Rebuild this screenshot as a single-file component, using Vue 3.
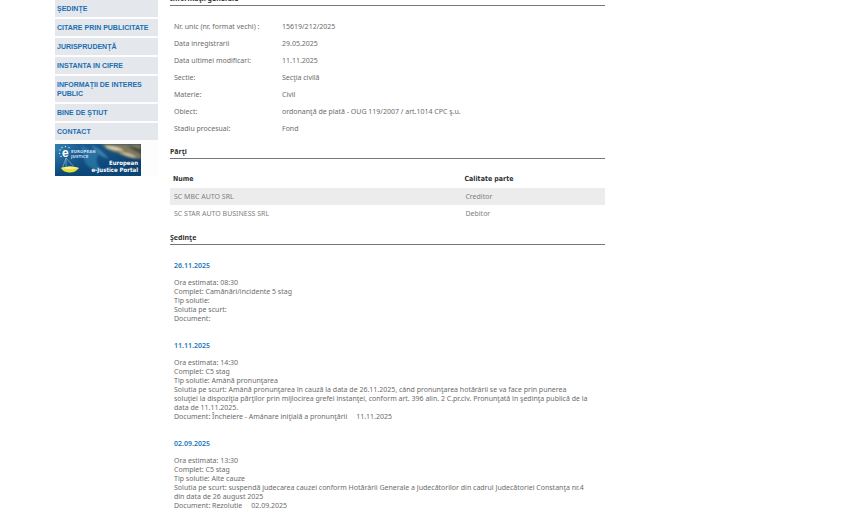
<script setup>
const menu = [
  'ŞEDINŢE',
  'CITARE PRIN PUBLICITATE',
  'JURISPRUDENŢĂ',
  'INSTANTA IN CIFRE',
  'INFORMAŢII DE INTERES PUBLIC',
  'BINE DE ŞTIUT',
  'CONTACT',
]

const details = [
  ['Nr. unic (nr. format vechi) :', '15619/212/2025'],
  ['Data inregistrarii', '29.05.2025'],
  ['Data ultimei modificari:', '11.11.2025'],
  ['Sectie:', 'Secţia civilă'],
  ['Materie:', 'Civil'],
  ['Obiect:', 'ordonanţă de plată - OUG 119/2007 / art.1014 CPC ş.u.'],
  ['Stadiu procesual:', 'Fond'],
]

const parties = [
  ['SC MBC AUTO SRL', 'Creditor'],
  ['SC STAR AUTO BUSINESS SRL', 'Debitor'],
]

const hearings = [
  {
    date: '26.11.2025',
    time: '08:30',
    panel: 'Camănări/incidente 5 stag',
    type: '',
    summary: '',
    doc: '',
    docDate: '',
  },
  {
    date: '11.11.2025',
    time: '14:30',
    panel: 'C5 stag',
    type: 'Amână pronunţarea',
    summary:
      'Amână pronunţarea în cauză la data de 26.11.2025, când pronunţarea hotărârii se va face prin punerea\nsoluţiei la dispoziţia părţilor prin mijlocirea grefei instanţei, conform art. 396 alin. 2 C.pr.civ. Pronunţată în şedinţa publică de la\ndata de 11.11.2025.',
    doc: 'Încheiere - Amânare iniţială a pronunţării',
    docDate: '11.11.2025',
  },
  {
    date: '02.09.2025',
    time: '13:30',
    panel: 'C5 stag',
    type: 'Alte cauze',
    summary:
      'suspendă judecarea cauzei conform Hotărârii Generale a Judecătorilor din cadrul Judecătoriei Constanţa nr.4\ndin data de 26 august 2025',
    doc: 'Rezolutie',
    docDate: '02.09.2025',
  },
]
</script>

<template>
  <div class="page">
    <aside class="side">
      <nav class="menu">
        <a v-for="item in menu" :key="item" href="#">{{ item }}</a>
      </nav>
      <a class="banner" href="#" aria-label="European e-Justice Portal">
        <svg viewBox="0 0 86 32" width="86" height="32">
          <defs>
            <linearGradient id="sky" x1="0" y1="0" x2="1" y2="0">
              <stop offset="0" stop-color="#2f7fae" />
              <stop offset="0.3" stop-color="#1c5a92" />
              <stop offset="0.7" stop-color="#13507f" />
              <stop offset="1" stop-color="#0d3a5e" />
            </linearGradient>
            <linearGradient id="deep" x1="0" y1="0" x2="0" y2="1">
              <stop offset="0.2" stop-color="#0a3d73" stop-opacity="0" />
              <stop offset="1" stop-color="#0a4676" />
            </linearGradient>
            <filter id="soft"><feGaussianBlur stdDeviation="0.9" /></filter>
          </defs>
          <rect width="86" height="32" fill="url(#sky)" />
          <rect width="86" height="32" fill="url(#deep)" />
          <g filter="url(#soft)">
            <path d="M46 0 Q54 8 63 9 Q70 14 86 15 V0Z" fill="#7d7860" />
            <path d="M50 2 Q64 2 69 7 Q60 7 52 4Z" fill="#e0d5b4" />
            <path d="M64 8 Q76 8 82 14 Q74 14 64 8Z" fill="#cdbf98" />
            <path d="M72 1 L86 5 V10 Q78 7 72 1Z" fill="#4b4b3e" />
            <path d="M26 1 Q36 8 44 9 Q38 18 48 28 Q30 25 29 14Z" fill="#3c9ac4" opacity=".45" />
            <path d="M36 1 Q46 5 54 15 Q44 13 36 1Z" fill="#69b6d4" opacity=".5" />
          </g>
          <path d="M11 14 L7 25 M11 14 L21 25 M11 14 V24" stroke="#9cc6dc" stroke-width=".6" fill="none" />
          <path d="M6 24 Q15 21 24 24 Q20 29 14 28.500 Q8 28 6 24Z" fill="#e6de35" />
          <path d="M6 24 Q15 21 24 24 Q15 26 6 24Z" fill="#f7f396" />
          <g fill="#d7e8f2">
            <circle cx="5" cy="6" r=".7" /><circle cx="7" cy="3.500" r=".7" />
            <circle cx="10.500" cy="2.500" r=".7" /><circle cx="14" cy="3.500" r=".7" />
            <circle cx="4.500" cy="9.500" r=".7" /><circle cx="6" cy="12.500" r=".7" />
          </g>
          <text class="logo-e" x="7" y="13">e</text>
          <text class="logo-name" x="16" y="9">EUROPEAN</text>
          <text class="logo-name" x="16" y="14">JUSTICE</text>
          <text class="logo-title" x="83" y="21" text-anchor="end">European</text>
          <text class="logo-title" x="83" y="28" text-anchor="end">e-Justice Portal</text>
        </svg>
      </a>
    </aside>

    <main class="content">
      <h2>Informaţii generale</h2>
      <dl class="details">
        <template v-for="[label, value] in details" :key="label">
          <dt>{{ label }}</dt>
          <dd>{{ value }}</dd>
        </template>
      </dl>

      <h2>Părţi</h2>
      <table class="parties">
        <thead>
          <tr><th scope="col">Nume</th><th scope="col">Calitate parte</th></tr>
        </thead>
        <tbody>
          <tr v-for="[name, role] in parties" :key="name">
            <td>{{ name }}</td><td>{{ role }}</td>
          </tr>
        </tbody>
      </table>

      <h2>Şedinţe</h2>
      <section v-for="h in hearings" :key="h.date" class="hearing">
        <h3>{{ h.date }}</h3>
        <p>Ora estimata: {{ h.time }}</p>
        <p>Complet: {{ h.panel }}</p>
        <p>Tip solutie: {{ h.type }}</p>
        <p>Solutia pe scurt: {{ h.summary }}</p>
        <p>Document: {{ h.doc }}<span v-if="h.docDate" class="doc-date">{{ h.docDate }}</span></p>
      </section>
    </main>
  </div>
</template>

<style>
body {
  background: #fff;
  overflow: hidden;
}
</style>

<style scoped>
.page {
  display: grid;
  grid-template-columns: 103px minmax(0, 435px);
  gap: 12px;
  align-items: start;
  height: 100vh;
  overflow: hidden;
  padding: 0 44px 0 55px;
  box-sizing: border-box;
  font-family: "Noto Sans", "DejaVu Sans", sans-serif;
  font-size: 7px;
  line-height: 9px;
  color: #6c6c6c;
}
.side {
  background: #fdfdfd;
}
.menu {
  display: flex;
  flex-direction: column;
  gap: 2px;
}
.menu a {
  padding: 4px 3px 4px 2px;
  background: #e4e7ec;
  color: #1d6fb0;
  font: bold 7px/9px "Liberation Sans", Arial, sans-serif;
  text-decoration: none;
}
.banner {
  display: block;
  margin-top: 4px;
}
.banner svg {
  display: block;
}
.logo-e {
  font: bold 12px "Liberation Sans", sans-serif;
  fill: #fff;
}
.logo-name {
  font: bold 4px "DejaVu Sans", sans-serif;
  fill: #c6dcea;
}
.logo-title {
  font: bold 6px "DejaVu Sans Condensed", "DejaVu Sans", sans-serif;
  fill: #fff;
}
.content {
  margin-top: -6px;
}
h2 {
  margin: 0;
  padding-bottom: 2px;
  border-bottom: 1px solid #777;
  color: #333;
  font-size: 7px;
  font-weight: bold;
  line-height: 9px;
}
.details {
  display: grid;
  grid-template-columns: 108px 1fr;
  margin: 0;
  padding: 12px 4px 10px;
  line-height: 17px;
}
.details dd {
  margin: 0;
}
.parties {
  width: 100%;
  margin: 11px 0;
  border-collapse: collapse;
  line-height: 17px;
}
.parties th,
.parties td {
  padding: 0 4px;
  text-align: left;
}
.parties td {
  color: #808080;
}
.parties th {
  padding: 0 3px;
  color: #333;
  font-family: "DejaVu Sans Condensed", "DejaVu Sans", sans-serif;
  line-height: 18px;
}
.parties th:first-child {
  width: 67%;
}
.parties tbody tr:nth-child(odd) {
  background: #ececec;
}
.hearing {
  padding: 16px 4px 2px;
}
.hearing h3 {
  margin: 0 0 8px;
  color: #1a78b8;
  font-size: 7px;
  font-weight: 600;
  line-height: 9px;
}
.hearing p {
  margin: 0;
  white-space: pre-line;
}
.doc-date {
  margin-left: 9px;
}
</style>
